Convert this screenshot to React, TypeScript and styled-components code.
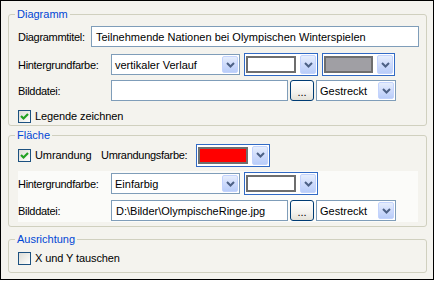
import React from "react";
import styled, { createGlobalStyle } from "styled-components";

const Global = createGlobalStyle`
  html, body { margin: 0; padding: 0; background: #ffffff; }
  body {
    font-family: "Liberation Sans", Arial, sans-serif;
    font-size: 11px;
    color: #000;
  }
  * { box-sizing: border-box; }
`;

const Window = styled.div`
  width: 434px;
  height: 280px;
  border: 1px solid #000;
  background: #f4f3ee;
  padding: 7px 6px 0 7px;
  display: flex;
  flex-direction: column;
`;

const Group = styled.fieldset<{ $h: number; $mt?: number }>`
  margin: ${(p) => p.$mt ?? 0}px 0 0 0;
  padding: 0 8px 0 9px;
  border: 1px solid #d0d0bf;
  border-radius: 3px;
  height: ${(p) => p.$h}px;
  min-width: 0;
  display: flex;
  flex-direction: column;
`;

const Legend = styled.legend`
  margin-left: -3px;
  padding: 0 2px;
  color: #0046d5;
  font-size: 11px;
  line-height: 13px;
  height: 13px;
`;

const Row = styled.div<{ $h?: number; $mt?: number }>`
  display: flex;
  align-items: center;
  height: ${(p) => p.$h ?? 21}px;
  margin-top: ${(p) => p.$mt ?? 0}px;
`;

const Label = styled.span<{ $w: number }>`
  width: ${(p) => p.$w}px;
  flex: none;
  white-space: nowrap;
  letter-spacing: -0.3px;
`;

const TextBox = styled.div<{ $w: number }>`
  width: ${(p) => p.$w}px;
  height: 21px;
  flex: none;
  border: 1px solid #7f9db9;
  background: #fff;
  display: flex;
  align-items: center;
  padding-left: 4px;
  white-space: nowrap;
  overflow: hidden;
`;

const Combo = styled.div<{ $w: number; $ml?: number }>`
  width: ${(p) => p.$w}px;
  height: 21px;
  flex: none;
  margin-left: ${(p) => p.$ml ?? 0}px;
  border: 1px solid #7f9db9;
  background: #fff;
  display: flex;
  align-items: stretch;
  padding: 1px;
`;

const ComboText = styled.span`
  flex: 1;
  display: flex;
  align-items: center;
  padding-left: 2px;
  white-space: nowrap;
  overflow: hidden;
`;

const DropButton = styled.div`
  width: 16px;
  flex: none;
  border: 1px solid #c3d3fd;
  border-radius: 2px;
  background: linear-gradient(180deg, #e6eefc 0%, #d1ddfc 45%, #b9cdf9 100%);
  display: flex;
  align-items: center;
  justify-content: center;
`;

const ColorCombo = styled.div<{ $w: number; $ml?: number }>`
  width: ${(p) => p.$w}px;
  height: 23px;
  flex: none;
  margin-left: ${(p) => p.$ml ?? 0}px;
  border: 1px solid #316ac5;
  background: #fff;
  display: flex;
  align-items: stretch;
  padding: 1px;
  gap: 4px;
`;

const Swatch = styled.div<{ $c: string }>`
  flex: 1;
  margin: 1px 0;
  border: 2px solid #6e6e6e;
  background: ${(p) => p.$c};
`;

const DotsButton = styled.div`
  width: 24px;
  height: 21px;
  flex: none;
  margin-left: 2px;
  border: 1px solid #003c74;
  border-radius: 3px;
  background: linear-gradient(180deg, #ffffff 0%, #f3f2ee 60%, #e3e1d8 100%);
  display: flex;
  align-items: flex-end;
  justify-content: center;
  padding-bottom: 3px;
  line-height: 10px;
`;

const CheckRow = styled.label<{ $w?: number }>`
  display: flex;
  align-items: center;
  gap: 4px;
  width: ${(p) => (p.$w ? `${p.$w}px` : "auto")};
  flex: none;
  letter-spacing: -0.1px;
`;

const Box = styled.span`
  width: 13px;
  height: 13px;
  flex: none;
  border: 1px solid #1c5180;
  background: linear-gradient(135deg, #dcdcd7 0%, #f4f4f0 70%, #ffffff 100%);
  display: flex;
  align-items: center;
  justify-content: center;
`;

const Shade = styled.div`
  margin-top: 5px;
  padding: 1px 0;
  background: #fbfbf9;
  display: flex;
  flex-direction: column;
`;

const Chevron = () => (
  <svg width="9" height="6" viewBox="0 0 9 6">
    <polyline points="1,1 4.5,4.5 8,1" fill="none" stroke="#4d6185" strokeWidth="2" />
  </svg>
);

const Check = () => (
  <svg width="9" height="9" viewBox="0 0 9 9">
    <polyline points="1,4 3.5,6.5 8,2" fill="none" stroke="#21a121" strokeWidth="2.2" />
  </svg>
);

const Select = ({ w, text, ml }: { w: number; text: string; ml?: number }) => (
  <Combo $w={w} $ml={ml}>
    <ComboText>{text}</ComboText>
    <DropButton>
      <Chevron />
    </DropButton>
  </Combo>
);

const ColorPick = ({ w, color, ml }: { w: number; color: string; ml?: number }) => (
  <ColorCombo $w={w} $ml={ml}>
    <Swatch $c={color} />
    <DropButton>
      <Chevron />
    </DropButton>
  </ColorCombo>
);

const CheckBox = ({ checked, text, w }: { checked: boolean; text: string; w?: number }) => (
  <CheckRow $w={w}>
    <Box>{checked && <Check />}</Box>
    <span>{text}</span>
  </CheckRow>
);

export default function App() {
  return (
    <>
      <Global />
      <Window>
        <Group $h={118}>
          <Legend>Diagramm</Legend>
          <Row $mt={5}>
            <Label $w={73}>Diagrammtitel:</Label>
            <TextBox $w={328}>Teilnehmende Nationen bei Olympischen Winterspielen</TextBox>
          </Row>
          <Row $mt={6} $h={23}>
            <Label $w={93}>Hintergrundfarbe:</Label>
            <Select w={129} text="vertikaler Verlauf" />
            <ColorPick w={74} color="#ffffff" ml={4} />
            <ColorPick w={73} color="#a09fa4" ml={4} />
          </Row>
          <Row $mt={4}>
            <Label $w={93}>Bilddatei:</Label>
            <TextBox $w={177} />
            <DotsButton>...</DotsButton>
            <Select w={80} text="Gestreckt" ml={2} />
          </Row>
          <Row $mt={7} $h={16}>
            <CheckBox checked text="Legende zeichnen" />
          </Row>
        </Group>

        <Group $h={98} $mt={3}>
          <Legend>Fläche</Legend>
          <Row $mt={2} $h={22}>
            <CheckBox checked text="Umrandung" w={83} />
            <Label $w={95}>Umrandungsfarbe:</Label>
            <ColorPick w={74} color="#ff0000" />
          </Row>
          <Shade>
            <Row $h={23}>
              <Label $w={93}>Hintergrundfarbe:</Label>
              <Select w={129} text="Einfarbig" />
              <ColorPick w={74} color="#ffffff" ml={4} />
            </Row>
            <Row $mt={5}>
              <Label $w={93}>Bilddatei:</Label>
              <TextBox $w={177}>D:\Bilder\OlympischeRinge.jpg</TextBox>
              <DotsButton>...</DotsButton>
              <Select w={80} text="Gestreckt" ml={2} />
            </Row>
          </Shade>
        </Group>

        <Group $h={40} $mt={6}>
          <Legend>Ausrichtung</Legend>
          <Row $mt={4} $h={16}>
            <CheckBox checked={false} text="X und Y tauschen" />
          </Row>
        </Group>
      </Window>
    </>
  );
}
